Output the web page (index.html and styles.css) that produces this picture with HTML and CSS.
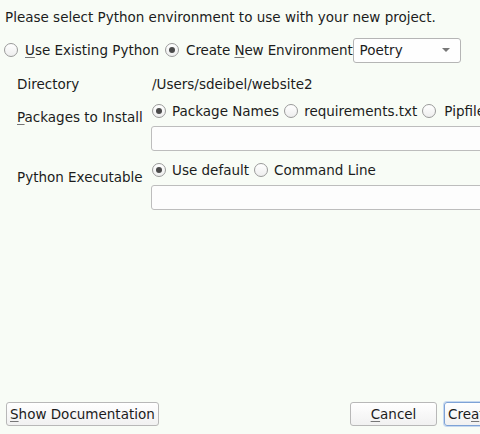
FILE: index.html
```html
<!DOCTYPE html>
<html>
<head>
<meta charset="utf-8">
<link rel="stylesheet" href="styles.css">
</head>
<body>
<div class="dialog">
  <p class="intro">Please select Python environment to use with your new project.</p>
  <div class="mode-row">
    <label class="radio"><span class="dot"></span><span><u>U</u>se Existing Python</span></label>
    <label class="radio"><span class="dot on"></span><span class="tight">Create <u>N</u>ew Environment</span></label>
    <div class="select"><span>Poetry</span><span class="caret"></span></div>
  </div>
  <div class="form">
    <div class="label">Directory</div>
    <div class="value">/Users/sdeibel/website2</div>

    <div class="label lbl-pkg"><u>P</u>ackages to Install</div>
    <div class="field">
      <div class="choices">
        <label class="radio"><span class="dot on"></span><span>Package Names</span></label>
        <label class="radio"><span class="dot"></span><span>requirements.txt</span></label>
        <label class="radio wide"><span class="dot"></span><span>Pipfile</span></label>
      </div>
      <div class="input"></div>
    </div>

    <div class="label lbl-exe">Python Executable</div>
    <div class="field">
      <div class="choices">
        <label class="radio"><span class="dot on"></span><span>Use default</span></label>
        <label class="radio"><span class="dot"></span><span>Command Line</span></label>
      </div>
      <div class="input"></div>
    </div>
  </div>
  <div class="buttons">
    <button class="btn"><u>S</u>how Documentation</button>
    <div class="spacer"></div>
    <button class="btn cancel"><u>C</u>ancel</button>
    <button class="btn primary">Cre<u>a</u>te</button>
  </div>
</div>
</body>
</html>
```
FILE: styles.css
```css
html, body {
  margin: 0;
  padding: 0;
  width: 480px;
  height: 434px;
  overflow: hidden;
  background: #f8fcf6;
}

.dialog {
  height: 434px;
  display: flex;
  flex-direction: column;
  font-family: "DejaVu Sans", sans-serif;
  font-size: 13.5px;
  color: #1c1c1c;
  white-space: nowrap;
}

u {
  text-decoration: underline;
  text-underline-offset: 2px;
  text-decoration-color: #777;
}

.intro {
  margin: 8px 0 0 5px;
  line-height: 18px;
}

/* environment mode choice + interpreter manager dropdown */
.mode-row {
  display: flex;
  align-items: center;
  margin: 11px 0 0 4px;
  height: 26px;
}

.tight {
  letter-spacing: -0.12px;
}

.radio {
  display: flex;
  align-items: center;
  gap: 7px;
  margin-right: 6px;
}

.choices .radio {
  gap: 6px;
  margin-right: 5px;
}

.choices .radio.wide {
  gap: 8px;
}

.dot {
  width: 12px;
  height: 12px;
  border: 1px solid #9a9a9a;
  border-radius: 50%;
  background: linear-gradient(#ffffff, #eeeeee);
  display: flex;
  align-items: center;
  justify-content: center;
  flex: none;
}

.dot.on::after {
  content: "";
  width: 6px;
  height: 6px;
  border-radius: 50%;
  background: #4a4a4a;
}

.select {
  display: flex;
  align-items: center;
  justify-content: space-between;
  box-sizing: border-box;
  width: 108px;
  height: 25px;
  margin-left: -6px;
  padding: 0 10px 0 6px;
  border: 1px solid #b5b5b5;
  border-radius: 3px;
  background: #fefefe;
}

.caret {
  width: 0;
  height: 0;
  border-left: 4px solid transparent;
  border-right: 4px solid transparent;
  border-top: 4px solid #777;
}

/* label / control grid */
.form {
  display: grid;
  grid-template-columns: 135px 1fr;
  grid-template-rows: 18px auto auto;
  row-gap: 9px;
  margin: 12px 0 0 17px;
}

.label,
.value {
  line-height: 18px;
}

.lbl-pkg { margin-top: 6px; }
.lbl-exe { margin-top: 8px; }

.form > .field:last-child { margin-top: 1px; }

.field {
  display: flex;
  flex-direction: column;
}

.choices {
  display: flex;
  align-items: center;
  height: 18px;
}

.input {
  margin: 6px 0 0 -1px;
  height: 23px;
  border: 1px solid #bdbdbd;
  border-radius: 3px;
  background: #fdfdfd;
  width: 340px;
}

/* dialog buttons */
.buttons {
  margin-top: auto;
  display: flex;
  align-items: center;
  padding: 0 0 8px 6px;
}

.spacer { flex: 1; }

.btn {
  font: inherit;
  color: #1c1c1c;
  height: 24px;
  border: 1px solid #b8b8b8;
  border-radius: 3px;
  background: linear-gradient(#ffffff, #f1f1f1);
  padding: 0 3px;
}

.cancel {
  width: 87px;
  margin-right: 7px;
}

.primary {
  width: 80px;
  border-color: #7ea3d6;
  box-shadow: 0 0 0 1px #c6d8f0;
  text-align: left;
  padding-left: 3px;
  margin-right: -44px;
}
```
